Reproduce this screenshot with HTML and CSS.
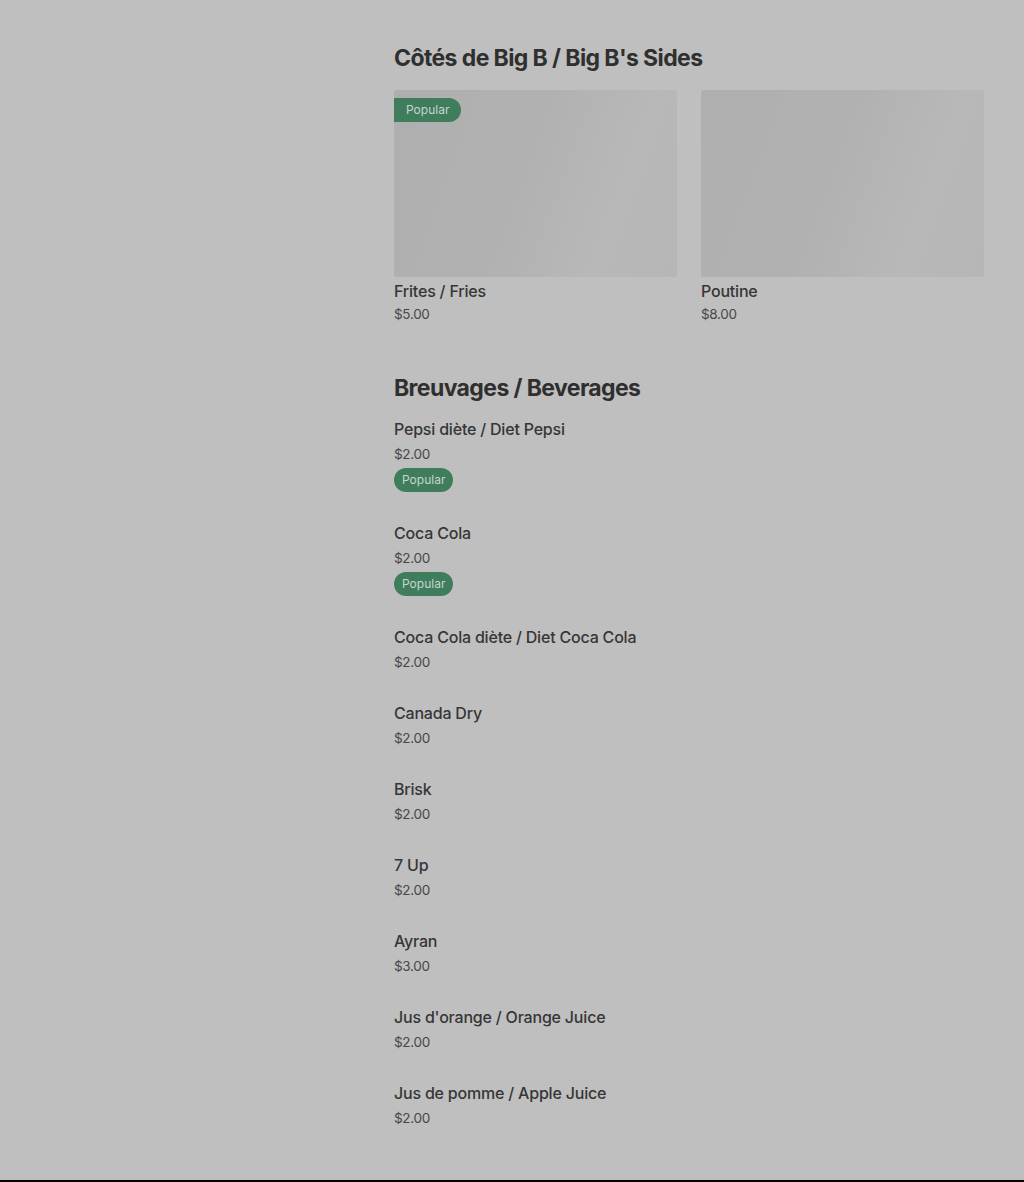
FILE: index.html
```html
<!DOCTYPE html>
<html lang="en">
<head>
    <meta charset="UTF-8">
    <meta name="viewport" content="width=device-width, initial-scale=1.0">
    <title>Big B - Menu</title>
    <link rel="stylesheet" href="styles.css">
</head>
<body>
    <div class="page">
        <aside class="sidebar"></aside>

        <main class="menu">
            <section class="menu-section">
                <h2 class="section-title">Côtés de Big B / Big B's Sides</h2>
                <div class="card-grid">
                    <div class="card">
                        <div class="card-image">
                            <span class="badge badge-corner">Popular</span>
                        </div>
                        <div class="item-name card-name">Frites / Fries</div>
                        <div class="item-price card-price">$5.00</div>
                    </div>
                    <div class="card">
                        <div class="card-image"></div>
                        <div class="item-name card-name">Poutine</div>
                        <div class="item-price card-price">$8.00</div>
                    </div>
                </div>
            </section>

            <section class="menu-section">
                <h2 class="section-title">Breuvages / Beverages</h2>
                <ul class="item-list">
                    <li class="item">
                        <div class="item-name">Pepsi diète / Diet Pepsi</div>
                        <div class="item-price">$2.00</div>
                        <span class="badge">Popular</span>
                    </li>
                    <li class="item">
                        <div class="item-name">Coca Cola</div>
                        <div class="item-price">$2.00</div>
                        <span class="badge">Popular</span>
                    </li>
                    <li class="item">
                        <div class="item-name">Coca Cola diète / Diet Coca Cola</div>
                        <div class="item-price">$2.00</div>
                    </li>
                    <li class="item">
                        <div class="item-name">Canada Dry</div>
                        <div class="item-price">$2.00</div>
                    </li>
                    <li class="item">
                        <div class="item-name">Brisk</div>
                        <div class="item-price">$2.00</div>
                    </li>
                    <li class="item">
                        <div class="item-name">7 Up</div>
                        <div class="item-price">$2.00</div>
                    </li>
                    <li class="item">
                        <div class="item-name">Ayran</div>
                        <div class="item-price">$3.00</div>
                    </li>
                    <li class="item">
                        <div class="item-name">Jus d'orange / Orange Juice</div>
                        <div class="item-price">$2.00</div>
                    </li>
                    <li class="item">
                        <div class="item-name">Jus de pomme / Apple Juice</div>
                        <div class="item-price">$2.00</div>
                    </li>
                </ul>
            </section>
        </main>
    </div>
    <footer class="footer"></footer>
</body>
</html>
```

FILE: styles.css
```css
* {
    margin: 0;
    padding: 0;
    box-sizing: border-box;
}

body {
    font-family: Inter, 'Noto Sans', sans-serif;
    background: #bfbfbf;
    color: #333333;
}

.page {
    display: grid;
    grid-template-columns: 354px 1fr;
    padding: 42px 40px 21px;
}

.section-title {
    font-size: 23px;
    line-height: 32px;
    font-weight: 700;
    letter-spacing: -0.6px;
    color: #2f2f2f;
}

.menu-section + .menu-section {
    margin-top: 48px;
}

.item-list {
    list-style: none;
    margin-top: 15px;
}

.item {
    margin-bottom: 31px;
}

.item-name {
    font-size: 16px;
    line-height: 20px;
    font-weight: 500;
    letter-spacing: -0.2px;
    color: #363636;
}

.item-price {
    margin-top: 5px;
    font-size: 13.5px;
    line-height: 20px;
    color: #474747;
    letter-spacing: -0.3px;
}

.card-grid {
    display: grid;
    grid-template-columns: 1fr 1fr;
    gap: 24px;
    margin-top: 16px;
}

.card-image {
    position: relative;
    height: 187px;
    border-radius: 2px;
    background: linear-gradient(110deg, #afafaf 0%, #b1b1b1 45%, #b8b8b8 75%, #b6b6b6 100%);
}

.card-name {
    margin-top: 4px;
}

.card-price {
    margin-top: 3px;
}

.badge {
    display: inline-block;
    margin-top: 4px;
    height: 24px;
    padding: 0 8px;
    border-radius: 12px;
    background: #3f7d5d;
    color: #c6d6cd;
    font-size: 12px;
    line-height: 24px;
}

.badge-corner {
    position: absolute;
    top: 8px;
    left: 0;
    margin-top: 0;
    padding: 0 12px;
    border-radius: 0 12px 12px 0;
}

.footer {
    height: 2px;
    background: #000000;
}
```
